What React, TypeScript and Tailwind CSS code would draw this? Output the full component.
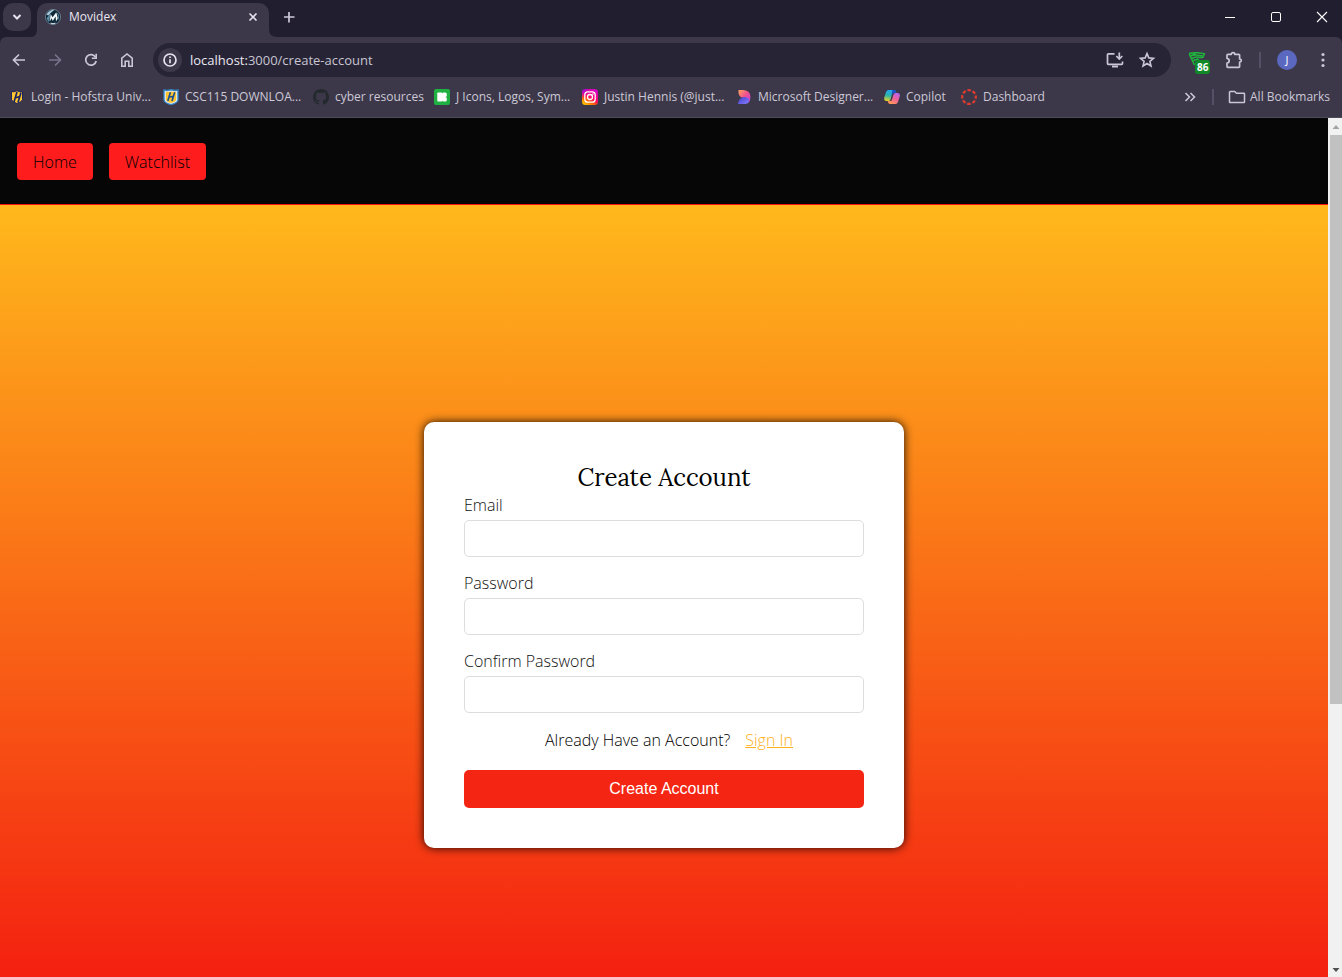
import React from "react";

const uiFont = "font-['Segoe_UI','Open_Sans',sans-serif]";

const ChevronDown = () => (
  <svg width="16" height="16" viewBox="0 0 16 16" fill="none" stroke="#e6e2ee" strokeWidth="2">
    <path d="M4.500 6 8 9.500 11.500 6" />
  </svg>
);

const MovidexLogo = () => (
  <svg width="16" height="16" viewBox="0 0 16 16">
    <circle cx="8" cy="8" r="7.600" fill="#0e2736" stroke="#7f98a6" strokeWidth=".7" />
    <path d="M1.500 5.500Q4 .8 9.500 .8L6.200 3.400 3.200 6.500Z" fill="#a8cbdd" />
    <path d="M1.500 9.500 5.200 4.200 4.600 11 3.800 13Z" fill="#5e8ba5" />
    <path d="M4.800 12.500 5.600 5 7.600 8.300 11.300 3.200 12.800 9.500 11 12.500 10.600 7.500 7.800 12 6.600 9.300Z" fill="#f3f8fa" />
    <path d="M12.500 4Q14.500 7 13.200 10.500" stroke="#5e8ba5" fill="none" />
    <path d="M5.500 14Q8 15.200 10.500 14" stroke="#c8d7de" strokeWidth="1.200" fill="none" />
  </svg>
);

const Close = () => (
  <svg width="16" height="16" viewBox="0 0 16 16" stroke="#e6e2ee" strokeWidth="1.600">
    <path d="m4.500 4.500 7 7M11.500 4.500l-7 7" />
  </svg>
);

const Plus = () => (
  <svg width="16" height="16" viewBox="0 0 16 16" stroke="#cfcad9" strokeWidth="1.700">
    <path d="M8 3v10.500M3 8h10.500" />
  </svg>
);

const BackArrow = () => (
  <svg width="16" height="16" viewBox="0 0 16 16" fill="none" stroke="#cbc5d8" strokeWidth="1.700">
    <path d="M14 8H3M8 2.500 2.500 8 8 13.500" />
  </svg>
);

const ForwardArrow = () => (
  <svg width="16" height="16" viewBox="0 0 16 16" fill="none" stroke="#77728a" strokeWidth="1.700">
    <path d="M2 8h11M8 2.500 13.500 8 8 13.500" />
  </svg>
);

const Reload = () => (
  <svg width="16" height="16" viewBox="0 0 16 16">
    <path d="M12.600 5.200A5.300 5.300 0 1 0 13.200 9" fill="none" stroke="#cbc5d8" strokeWidth="1.700" />
    <path d="M14 1.800V7H8.800V5.400h3.600V1.800Z" fill="#cbc5d8" />
  </svg>
);

const HomeIcon = () => (
  <svg width="16" height="16" viewBox="0 0 16 16" fill="none" stroke="#cbc5d8" strokeWidth="1.600">
    <path d="M2.800 6.200 8 2l5.200 4.200v8H9.800V9.300H6.200v4.900H2.800Z" />
  </svg>
);

const Info = () => (
  <svg width="16" height="16" viewBox="0 0 16 16" fill="none" stroke="#e6e2ee">
    <circle cx="8" cy="8" r="6" strokeWidth="1.700" />
    <path d="M8 7.200v4M8 4.500v1.600" strokeWidth="1.700" />
  </svg>
);

const Install = () => (
  <svg width="18" height="18" viewBox="0 0 18 18" fill="none" stroke="#cbc5d8" strokeWidth="1.700">
    <path d="M8.500 2.800H2.300Q1.500 2.800 1.500 3.600v8.900q0 .8.800.8h13.400q.8 0 .8-.8V10.500M13.300 1.500v6M10.300 5l3 3 3-3" />
    <path d="M6 15.500h6" strokeWidth="2" />
  </svg>
);

const Star = () => (
  <svg width="18" height="18" viewBox="0 0 18 18" fill="none" stroke="#cbc5d8" strokeWidth="1.600">
    <path d="m9 2.500 1.800 4.400 4.700.4-3.600 3.100 1.100 4.600L9 12.500 5 15l1.100-4.600-3.600-3.100 4.700-.4Z" />
  </svg>
);

const WifiFan = () => (
  <svg width="18" height="16" viewBox="0 0 18 16" fill="none" stroke="#1fb53c" strokeWidth="1.500">
    <path d="M1 1.500Q9-.3 17 2M1.200 2 6.500 13M2.500 4Q8 1.800 16 4.500M4 6.500Q8 4 14 5.800M5 9Q8 6.500 11 7.500M8 1.500 2.500 4M16.500 2 14.500 6" />
  </svg>
);

const Puzzle = () => (
  <svg width="18" height="18" viewBox="0 0 18 18">
    <path
      d="M2 4.200Q2 3.300 2.900 3.300H6.300Q6.300 1.700 8 1.700t1.700 1.600h4Q14.600 3.300 14.600 4.200V8Q16.300 8 16.300 9.500T14.600 11.100v4.300q0 .9-.9.900H2.900Q2 16.300 2 15.400V12.200Q4.200 11.800 4.200 9.800T2 7.400Z"
      fill="none"
      stroke="#cbc5d8"
      strokeWidth="1.700"
      strokeLinejoin="round"
    />
  </svg>
);

const Dots = () => (
  <svg width="4" height="16" viewBox="0 0 4 16" fill="#cbc5d8">
    <circle cx="2" cy="2.500" r="1.600" />
    <circle cx="2" cy="8" r="1.600" />
    <circle cx="2" cy="13.500" r="1.600" />
  </svg>
);

const HofstraIcon = () => (
  <svg width="16" height="16" viewBox="0 0 16 16">
    <path d="M2.500 2.500 5 2.800 8 1.800l3 1 2.500-.3V10.500Q13 13 8 14.500 3 13 2.500 10.500Z" fill="#ffc62e" stroke="#1b2360" />
    <path d="M8 3 5 13M12 3.500 9 13.500M6 9 10.800 7.500" stroke="#1b2360" strokeWidth="1.700" fill="none" />
  </svg>
);

const CscIcon = () => (
  <svg width="16" height="16" viewBox="0 0 16 16">
    <path d="M1 1 4 1.500 8 .8l4 .7 3-.5V11Q14.500 14 8 15.600 1.500 14 1 11Z" fill="#e4eff8" stroke="#3483c4" strokeWidth="1.400" />
    <path d="M2.800 2.800h10.400v8Q12.500 13 8 14 3.500 13 2.800 10.800Z" fill="#fbc32d" />
    <path d="M7.400 3.200 4.800 12M11.700 3.200 9 12M5.500 8.200 10.800 7.200" stroke="#174f94" strokeWidth="1.600" fill="none" />
  </svg>
);

const GithubIcon = () => (
  <svg width="16" height="16" viewBox="0 0 16 16" fill="#24292e">
    <path d="M8 0C3.580 0 0 3.580 0 8c0 3.540 2.290 6.530 5.470 7.590.4.070.55-.17.55-.38 0-.19-.01-.82-.01-1.490-2.010.37-2.530-.49-2.690-.94-.09-.23-.48-.94-.82-1.130-.28-.15-.68-.52-.01-.53.63-.01 1.080.58 1.230.82.72 1.210 1.870.87 2.330.66.07-.52.28-.87.51-1.070-1.780-.2-3.640-.89-3.640-3.950 0-.87.31-1.590.82-2.150-.08-.2-.36-1.020.08-2.120 0 0 .67-.21 2.200.82.640-.18 1.320-.27 2-.27s1.360.09 2 .27c1.530-1.040 2.200-.82 2.200-.82.44 1.100.16 1.920.08 2.120.51.56.82 1.270.82 2.150 0 3.070-1.870 3.750-3.650 3.950.29.25.54.73.54 1.480 0 1.070-.01 1.930-.01 2.200 0 .21.15.46.55.38A8.010 8.010 0 0 0 16 8c0-4.420-3.580-8-8-8Z" />
  </svg>
);

const Icons8Icon = () => (
  <svg width="16" height="16" viewBox="0 0 16 16">
    <rect width="16" height="16" rx="2" fill="#1fb141" />
    <rect x="3.300" y="3.500" width="5" height="9" rx=".8" fill="#fff" />
    <rect x="8" y="3.500" width="4.800" height="4.500" rx="1.600" fill="#fff" />
    <rect x="8" y="8" width="4.800" height="4.500" rx="1.600" fill="#fff" />
    <path d="M7 7h2v2H7z" fill="#fff" />
  </svg>
);

const InstagramIcon = () => (
  <svg width="16" height="16" viewBox="0 0 16 16">
    <defs>
      <linearGradient id="ig" x1=".1" y1="1" x2=".7" y2="0">
        <stop offset="0" stopColor="#ffd600" />
        <stop offset=".3" stopColor="#ff6a00" />
        <stop offset=".55" stopColor="#ff0169" />
        <stop offset="1" stopColor="#d300c5" />
      </linearGradient>
      <radialGradient id="igb" cx="0" cy="0" r=".6">
        <stop offset="0" stopColor="#6b1bff" />
        <stop offset="1" stopColor="#d300c5" stopOpacity="0" />
      </radialGradient>
    </defs>
    <rect width="16" height="16" rx="3.500" fill="url(#ig)" />
    <rect width="16" height="16" rx="3.500" fill="url(#igb)" />
    <rect x="2.800" y="2.800" width="10.400" height="10.400" rx="3" fill="none" stroke="#fff" strokeWidth="1.300" />
    <circle cx="8" cy="8" r="2.500" fill="none" stroke="#fff" strokeWidth="1.300" />
    <circle cx="11" cy="5" r=".8" fill="#fff" />
  </svg>
);

const DesignerIcon = () => (
  <svg width="16" height="16" viewBox="0 0 16 16">
    <defs>
      <linearGradient id="dsa" x1="0" y1="0" x2="1" y2="1">
        <stop offset="0" stopColor="#ffa25c" />
        <stop offset=".5" stopColor="#f0508f" />
        <stop offset="1" stopColor="#b33ff0" />
      </linearGradient>
      <linearGradient id="dsb" x1="0" y1="0" x2="1" y2="1">
        <stop offset="0" stopColor="#3b3fc9" />
        <stop offset="1" stopColor="#8a7cff" />
      </linearGradient>
    </defs>
    <path d="M2.500 1H7.500Q14.500 1.500 14.500 8 14.500 12 12 14L8 9Q3 8.500 2.500 4Z" fill="url(#dsa)" />
    <path d="M2 15Q3 8 8.500 8 13.500 8.300 13 12.500 12 15 9 15Z" fill="url(#dsb)" />
  </svg>
);

const CopilotIcon = () => (
  <svg width="16" height="16" viewBox="0 0 16 16">
    <defs>
      <linearGradient id="cpa" x1=".4" y1="0" x2=".2" y2="1">
        <stop offset="0" stopColor="#20a5f5" />
        <stop offset=".5" stopColor="#2fb5a8" />
        <stop offset="1" stopColor="#f5d21a" />
      </linearGradient>
      <linearGradient id="cpb" x1=".8" y1="0" x2=".3" y2="1">
        <stop offset="0" stopColor="#b264f0" />
        <stop offset=".5" stopColor="#f0609a" />
        <stop offset="1" stopColor="#ff9a55" />
      </linearGradient>
    </defs>
    <path d="M4.500 1H10Q11.500 1 12 3L12.300 4H9.500Q8.300 4 8 5.500L6.700 10Q6 12.500 4 12H2Q-.5 11.500.3 8.500L2 3Q2.800 1 4.500 1Z" fill="url(#cpa)" />
    <path d="M8.500 1h2Q11.500 1 12 3l.3 1H9.500Q8.500 4 8 5.500L7 8.500Z" fill="#1c4fc4" />
    <path d="M11.500 15H6Q4.500 15 4 13l-.3-1H6.500Q7.700 12 8 10.500L9.300 6Q10 3.800 12 4h2Q16.500 4.500 15.700 7.500L14 13Q13.200 15 11.500 15Z" fill="url(#cpb)" />
  </svg>
);

const DashboardIcon = () => (
  <svg width="16" height="16" viewBox="0 0 16 16">
    <circle cx="8" cy="8" r="6.800" fill="none" stroke="#e23b2e" strokeWidth="2.200" strokeDasharray="3.500 1.840" strokeDashoffset="1.750" />
  </svg>
);

const Folder = () => (
  <svg className="shrink-0" width="18" height="16" viewBox="0 0 18 16" fill="none" stroke="#cbc5d8" strokeWidth="1.500" strokeLinejoin="round">
    <path d="M2.200 2.500h4.600l1.700 1.700h7.300q.7 0 .7.700v8q0 .7-.7.700H2.200q-.7 0-.7-.7V3.200q0-.7.7-.7Z" />
  </svg>
);

const bookmarks: { label: string; width: string; icon: React.ReactNode }[] = [
  { label: "Login - Hofstra Univ...", width: "w-[138px]", icon: <HofstraIcon /> },
  { label: "CSC115 DOWNLOA...", width: "w-[134px]", icon: <CscIcon /> },
  { label: "cyber resources", width: "w-[105px]", icon: <GithubIcon /> },
  { label: "J Icons, Logos, Sym...", width: "w-[132px]", icon: <Icons8Icon /> },
  { label: "Justin Hennis (@just...", width: "w-[138px]", icon: <InstagramIcon /> },
  { label: "Microsoft Designer...", width: "w-[132px]", icon: <DesignerIcon /> },
  { label: "Copilot", width: "w-[61px]", icon: <CopilotIcon /> },
  { label: "Dashboard", width: "w-[80px]", icon: <DashboardIcon /> },
];

function TabStrip() {
  return (
    <div className="flex h-[37px] shrink-0 items-end">
      <button aria-label="Search tabs" className="mb-[6px] ml-[3px] grid size-7 place-items-center rounded-[10px] bg-[#3c384a]">
        <ChevronDown />
      </button>
      <svg width="6" height="8" viewBox="0 0 6 8" fill="#3c384a">
        <path d="M6 0Q6 8 0 8H6Z" />
      </svg>
      <div className="flex h-[34px] w-[232px] items-center rounded-t-[10px] bg-[#3c384a] px-2 pb-[6px]">
        <MovidexLogo />
        <span className="ml-2 flex-1 text-[12px] leading-[18px] text-[#e9e6f0]">Movidex</span>
        <button aria-label="Close tab">
          <Close />
        </button>
      </div>
      <svg width="8" height="8" viewBox="0 0 8 8" fill="#3c384a">
        <path d="M0 0Q0 8 8 8H0Z" />
      </svg>
      <button aria-label="New tab" className="mb-3 ml-1">
        <Plus />
      </button>
      <div className="ml-auto flex h-[34px] items-center gap-[34px] self-start pr-[14px]">
        <button aria-label="Minimize">
          <svg width="12" height="12" viewBox="0 0 12 12" stroke="#fff">
            <path d="M1 6.500h10" />
          </svg>
        </button>
        <button aria-label="Maximize">
          <svg width="12" height="12" viewBox="0 0 12 12" fill="none" stroke="#fff">
            <rect x="1.500" y="1.500" width="9" height="9" rx="1.500" />
          </svg>
        </button>
        <button aria-label="Close window">
          <svg width="12" height="12" viewBox="0 0 12 12" stroke="#fff" strokeWidth="1.100">
            <path d="m1 1 10 10M11 1 1 11" />
          </svg>
        </button>
      </div>
    </div>
  );
}

function Toolbar() {
  return (
    <div className="flex h-[46px] shrink-0 items-center rounded-t-[6px] bg-[#3c384a] pr-[17px] pl-[11px]">
      <div className="flex gap-5">
        <button aria-label="Back"><BackArrow /></button>
        <button aria-label="Forward"><ForwardArrow /></button>
        <button aria-label="Reload"><Reload /></button>
        <button aria-label="Home page"><HomeIcon /></button>
      </div>
      <div className="ml-[18px] flex h-[34px] flex-1 items-center rounded-full bg-[#272436] pr-[15px] pl-[5px]">
        <button aria-label="Site information" className="grid size-6 place-items-center rounded-full bg-[#3c384a]">
          <Info />
        </button>
        <a href="#address" className="ml-2 flex-1 text-[13px] leading-6 text-[#c8c4d1]">
          <span className="text-[#ebe8f1]">localhost:</span>3000/create-account
        </a>
        <button aria-label="Install app"><Install /></button>
        <button aria-label="Bookmark this page" className="ml-[14px]"><Star /></button>
      </div>
      <button aria-label="Signal extension" className="relative ml-[17px]">
        <WifiFan />
        <span className="absolute top-2 left-[7px] rounded-[3px] bg-[#108a26] px-[2px] text-[10px] leading-[14px] font-bold text-white">86</span>
      </button>
      <button aria-label="Extensions" className="ml-[19px]"><Puzzle /></button>
      <span className="ml-4 h-4 w-[2px] bg-[#555065]" />
      <button aria-label="Profile" className="ml-4 grid size-5 place-items-center rounded-full bg-[#5b68c0] text-[11px] leading-5 text-white">J</button>
      <button aria-label="Browser menu" className="ml-6"><Dots /></button>
    </div>
  );
}

function BookmarksBar() {
  return (
    <div className="flex h-[35px] shrink-0 items-center border-b border-[#4e4a58] bg-[#3c384a] pr-3 pb-[7px] pl-[9px] text-[12px] text-[#cdc8d6]">
      <div className="flex gap-4">
        {bookmarks.map((b) => (
          <a key={b.label} href="#bookmark" className={`flex items-center gap-[6px] whitespace-nowrap ${b.width}`}>
            <span className="shrink-0">{b.icon}</span>
            {b.label}
          </a>
        ))}
      </div>
      <button aria-label="More bookmarks" className="ml-auto">
        <svg width="12" height="12" viewBox="0 0 12 12" fill="none" stroke="#cbc5d8" strokeWidth="1.600">
          <path d="M1.500 2 5.500 6l-4 4M6.500 2l4 4-4 4" />
        </svg>
      </button>
      <span className="ml-4 h-4 w-[2px] bg-[#555065]" />
      <a href="#all" className="ml-[14px] flex items-center gap-1 whitespace-nowrap">
        <Folder />
        All Bookmarks
      </a>
    </div>
  );
}

function Scrollbar() {
  return (
    <div className="flex w-[14px] shrink-0 flex-col bg-[#f1f1f1] pl-[2px]">
      <svg className="shrink-0" width="12" height="17" viewBox="0 0 12 17" fill="#a3a3a3">
        <path d="M2.500 11 6 7l3.500 4Z" />
      </svg>
      <div className="flex-1">
        <div className="h-[69%] bg-[#c1c1c1]" />
      </div>
      <svg className="shrink-0" width="12" height="17" viewBox="0 0 12 17" fill="#505050">
        <path d="M2.500 8 6 12l3.500-4Z" />
      </svg>
    </div>
  );
}

function Field({ id, label, type }: { id: string; label: string; type: string }) {
  return (
    <div className="mb-[15px]">
      <label htmlFor={id} className="mb-1 block leading-[22px] text-[#111]">{label}</label>
      <input id={id} type={type} className="block h-[37px] w-full rounded-[5px] border border-[#ddd] bg-white px-2 outline-none" />
    </div>
  );
}

function CreateAccountPage() {
  return (
    <div className="min-w-0 flex-1 overflow-hidden bg-[linear-gradient(#ffb81c_88px,#f42011)] font-['Segoe_UI','Open_Sans',sans-serif] text-[16px] font-light">
      <nav className="flex h-[87px] items-center gap-4 border-b border-[#ff1010] bg-[#060606] px-[17px] text-black">
        <a href="#home" className="rounded-[4px] bg-[#ff1c1c] px-4 pt-[7px] pb-[5px] leading-[25px]">Home</a>
        <a href="#watchlist" className="rounded-[4px] bg-[#ff1c1c] px-4 pt-[7px] pb-[5px] leading-[25px]">Watchlist</a>
      </nav>
      <main className="flex min-h-full items-center justify-center">
        <form className="w-full max-w-[480px] rounded-[10px] bg-white p-10 shadow-[0_0_10px_rgba(0,0,0,0.9)]" onSubmit={(e) => e.preventDefault()}>
          <h1 className="text-center font-['Lora','Liberation_Serif',serif] text-[24px] leading-8 font-normal text-black">Create Account</h1>
          <Field id="email" label="Email" type="email" />
          <Field id="password" label="Password" type="password" />
          <Field id="confirm" label="Confirm Password" type="password" />
          <p className="mb-[18px] pl-[10px] text-center leading-6 text-black">
            Already Have an Account?
            <a href="#sign-in" className="ml-[15px] text-[#ffb020] underline">Sign In</a>
          </p>
          <button type="submit" className="h-[38px] w-full rounded-[5px] bg-[#f42613] font-['Liberation_Sans',Arial,sans-serif] font-normal text-white">
            Create Account
          </button>
        </form>
      </main>
    </div>
  );
}

export default function App() {
  return (
    <div className={`flex h-screen flex-col overflow-hidden bg-[#211e2f] ${uiFont}`}>
      <TabStrip />
      <Toolbar />
      <BookmarksBar />
      <div className="flex min-h-0 flex-1">
        <CreateAccountPage />
        <Scrollbar />
      </div>
    </div>
  );
}
